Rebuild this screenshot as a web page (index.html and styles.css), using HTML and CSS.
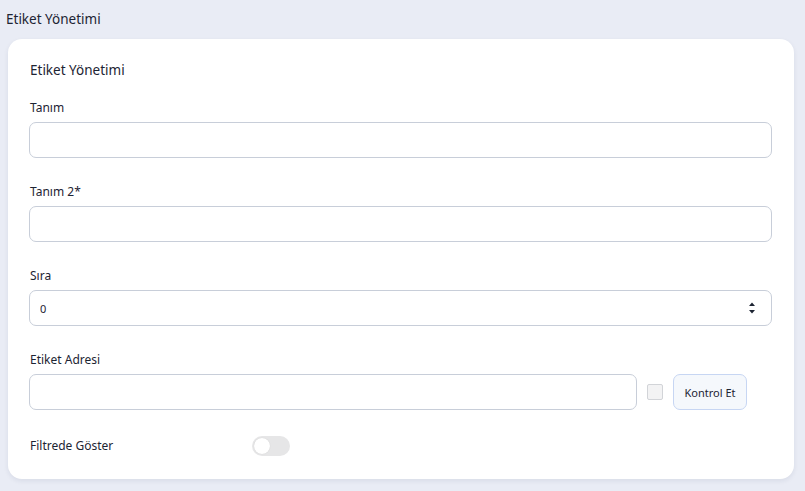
FILE: index.html
```html
<!DOCTYPE html>
<html lang="tr">
  <head>
    <meta charset="UTF-8" />
    <meta name="viewport" content="width=device-width, initial-scale=1.0" />
    <title>Etiket Yönetimi</title>
    <link rel="stylesheet" href="styles.css">
  </head>
  <body>
    <h1 class="page-title">Etiket Yönetimi</h1>
    <div class="card">
      <h2 class="card-title">Etiket Yönetimi</h2>
      <form class="tag-form">
        <div class="field">
          <label for="tanim">Tanım</label>
          <input type="text" id="tanim" class="text-input" />
        </div>

        <div class="field">
          <label for="tanim2">Tanım 2*</label>
          <input type="text" id="tanim2" class="text-input" />
        </div>

        <div class="field">
          <label for="sira">Sıra</label>
          <div class="number-box">
            <input type="text" id="sira" class="number-input" value="0" />
            <svg class="spinner" width="8" height="14" viewBox="0 0 8 14">
              <path d="M4 1.5 L7 5 L1 5 Z" fill="#1d2433" />
              <path d="M1 9 L7 9 L4 12.5 Z" fill="#1d2433" />
            </svg>
          </div>
        </div>

        <div class="field">
          <label for="adres">Etiket Adresi</label>
          <div class="address-row">
            <input type="text" id="adres" class="text-input" />
            <span class="check-box"></span>
            <button type="button" class="check-button">Kontrol Et</button>
          </div>
        </div>

        <div class="toggle-row">
          <span class="toggle-label">Filtrede Göster</span>
          <span class="toggle"><span class="knob"></span></span>
        </div>
      </form>
    </div>
  </body>
</html>
```

FILE: styles.css
```css
body {
  font-family: "Noto Sans", "Open Sans", sans-serif;
  background-color: #e9ecf5;
  color: #1d2433;
  margin: 0;
  padding: 9px 11px 10px 8px;
}
.page-title {
  font-size: 13.5px;
  font-weight: 400;
  line-height: 20px;
  margin: 0 0 10px -2px;
}
.card {
  background: #ffffff;
  border-radius: 14px;
  box-shadow: 0 2px 5px rgba(30, 40, 80, 0.08);
  padding: 21px 22px 23px 21px;
}
.card-title {
  font-size: 13.5px;
  font-weight: 400;
  line-height: 20px;
  margin: 0 0 18px 1px;
}
.tag-form {
  display: flex;
  flex-direction: column;
  gap: 24px;
}
.field {
  display: flex;
  flex-direction: column;
  gap: 4px;
}
label,
.toggle-label {
  font-size: 12px;
  line-height: 20px;
  margin-left: 1px;
}
.text-input,
.number-box {
  height: 36px;
  box-sizing: border-box;
  border: 1px solid #c8ced9;
  border-radius: 7px;
  background: #ffffff;
  font-family: inherit;
  font-size: 11px;
  color: #1d2433;
  width: 100%;
}
.number-box {
  display: flex;
  align-items: center;
  padding: 0 15px 0 10px;
}
.number-input {
  border: none;
  outline: none;
  flex: 1;
  font-family: inherit;
  font-size: 11px;
  color: #1d2433;
  padding: 0;
}
.address-row {
  display: flex;
  align-items: center;
  gap: 10px;
}
.address-row .text-input {
  flex: 1;
}
.check-box {
  width: 16px;
  height: 16px;
  box-sizing: border-box;
  border: 1px solid #d2d4d8;
  border-radius: 2px;
  background: #f3f3f4;
  flex-shrink: 0;
}
.check-button {
  height: 36px;
  width: 74px;
  flex-shrink: 0;
  border: 1px solid #c7d6f3;
  border-radius: 7px;
  background: #f5f8fc;
  color: #1d2433;
  font-family: inherit;
  font-size: 11px;
  padding: 0;
  margin-right: 25px;
}
.toggle-row {
  display: flex;
  align-items: center;
  margin-top: 2px;
}
.toggle-label {
  width: 222px;
}
.toggle {
  width: 38px;
  height: 20px;
  border-radius: 10px;
  background: #e6e6e7;
  display: flex;
  align-items: center;
  padding: 0 2px;
  box-sizing: border-box;
}
.knob {
  width: 16px;
  height: 16px;
  border-radius: 50%;
  background: #ffffff;
  box-shadow: 0 0 1px rgba(0, 0, 0, 0.15);
}
```
